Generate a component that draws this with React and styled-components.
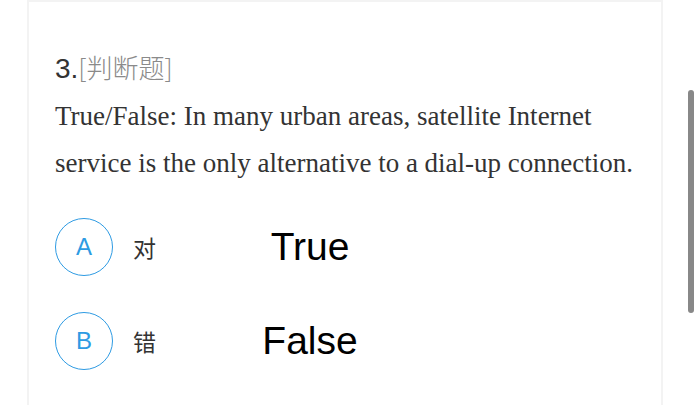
import React from 'react'
import styled, { createGlobalStyle } from 'styled-components'

const GlobalStyle = createGlobalStyle`
  html, body {
    margin: 0;
    padding: 0;
    background: #ffffff;
    overflow: hidden;
  }
`

const Page = styled.div`
  position: relative;
  width: 700px;
  height: 405px;
  overflow: hidden;
  background: #fff;
`

const Card = styled.div`
  margin-left: 27px;
  width: 636px;
  height: 420px;
  box-sizing: border-box;
  border: 2px solid #f3f3f3;
  border-bottom: none;
  padding: 50px 0 0 26px;
`

const Title = styled.div`
  font-family: "Liberation Sans", "Noto Sans CJK SC", sans-serif;
  font-size: 28px;
  line-height: 30px;
  color: #333;
`

const Kind = styled.span`
  font-family: "Noto Sans CJK SC", sans-serif;
  font-size: 26px;
  color: #8a8a8a;
  font-weight: 300;
`

const Question = styled.p`
  margin: 9px 0 0;
  font-family: "Liberation Serif", serif;
  font-size: 27px;
  line-height: 47px;
  color: #333;
  width: 590px;
`

const Options = styled.div`
  display: flex;
  flex-direction: column;
  gap: 36px;
  margin-top: 31px;
`

const Option = styled.div`
  display: flex;
  align-items: center;
  height: 58px;
`

const Badge = styled.div`
  width: 58px;
  height: 58px;
  box-sizing: border-box;
  border-radius: 50%;
  border: 1.5px solid #2e9be3;
  color: #2e9be3;
  display: flex;
  align-items: center;
  justify-content: center;
  font-family: "Liberation Sans", sans-serif;
  font-size: 24px;
  flex-shrink: 0;
`

const Label = styled.div`
  margin-left: 20px;
  width: 50px;
  font-family: "Noto Sans CJK SC", sans-serif;
  font-size: 23px;
  color: #333;
`

const Value = styled.div`
  width: 254px;
  text-align: center;
  font-family: "Liberation Sans", sans-serif;
  font-size: 39px;
  color: #000;
`

const Scrollbar = styled.div`
  position: absolute;
  left: 688px;
  top: 90px;
  width: 6px;
  height: 223px;
  border-radius: 3px;
  background: #888;
`

const options = [
  { key: 'A', label: '对', value: 'True' },
  { key: 'B', label: '错', value: 'False' },
]

export default function App() {
  return (
    <Page>
      <GlobalStyle />
      <Card>
        <Title>
          3.<Kind>[判断题]</Kind>
        </Title>
        <Question>
          True/False: In many urban areas, satellite Internet service is the only alternative to a dial-up connection.
        </Question>
        <Options>
          {options.map((o) => (
            <Option key={o.key}>
              <Badge>{o.key}</Badge>
              <Label>{o.label}</Label>
              <Value>{o.value}</Value>
            </Option>
          ))}
        </Options>
      </Card>
      <Scrollbar />
    </Page>
  )
}
